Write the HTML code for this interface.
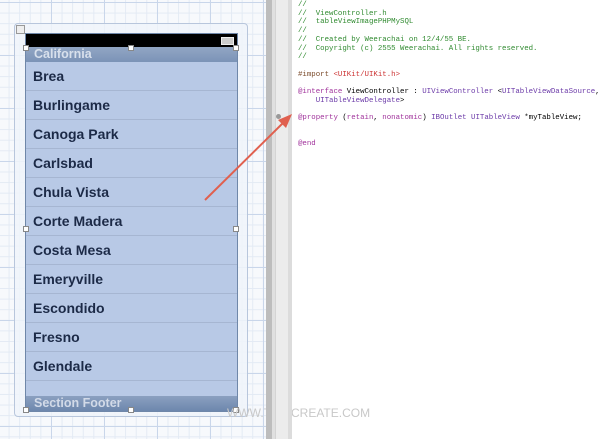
<!DOCTYPE html>
<html><head><style>
body{margin:0;width:600px;height:439px;overflow:hidden;position:relative;background:#fff;font-family:"Liberation Sans",sans-serif}
.grid{position:absolute;left:0;top:0;width:266px;height:439px;background-color:#f7f9fc;
background-image:linear-gradient(#c9d6ea 1px,transparent 1px),linear-gradient(90deg,#c9d6ea 1px,transparent 1px),linear-gradient(#e3eaf4 1px,transparent 1px),linear-gradient(90deg,#e3eaf4 1px,transparent 1px);
background-size:53px 53px,53px 53px,10.6px 10.6px,10.6px 10.6px;background-position:-2px 2px}
.frame{position:absolute;left:14px;top:23px;width:232px;height:392px;border:1px solid #b8c6dc;border-radius:4px;background:rgba(240,244,250,.85)}
.tbl{position:absolute;left:25px;top:33px;width:211px;height:377px;border:1px solid #6f87a9;background:#b8c9e6;overflow:hidden}
.sb{height:13px;background:#000;position:relative}
.bat{position:absolute;right:3px;top:3px;width:11px;height:6px;background:#ccc;border:1px solid #eee}
.hdr{height:15px;background:linear-gradient(#92a6c4,#7b93b7);color:#d8e0ec;font-weight:bold;font-size:12.5px;line-height:15px;padding-left:8px}
.row{height:28px;border-bottom:1px solid #a6b6d2;color:#1c2a47;font-weight:bold;font-size:14px;line-height:29px;padding-left:7px}
.ftr{position:absolute;bottom:0;left:0;right:0;height:15px;background:linear-gradient(#8ba0c0,#6d87ad);color:#d2dae8;font-weight:bold;font-size:12.5px;line-height:15px;padding-left:8px}
.h{position:absolute;width:4px;height:4px;background:#fff;border:1px solid #888}
.scr{position:absolute;left:266px;top:0;width:6px;height:439px;background:#bdbdbd}
.scr2{position:absolute;left:272px;top:0;width:3px;height:439px;background:#e0e0e0}
.gut{position:absolute;left:275px;top:0;width:13px;height:439px;background:#ececec;border-left:1px solid #d4d4d4}
.gut2{position:absolute;left:288px;top:0;width:4px;height:439px;background:#dcdcdc}
pre{position:absolute;left:298px;top:1px;margin:0;font-family:"Liberation Mono",monospace;font-size:7.4px;line-height:8.7px;color:#000}
.c{color:#2f8a2f}.k{color:#a0329b}.s{color:#c33}.t{color:#6b3aa8}
</style></head><body>
<div class="grid"></div>
<div class="frame"></div>
<div style="position:absolute;left:16px;top:25px;width:7px;height:7px;border:1px solid #999;background:#eee"></div>
<div class="tbl">
<div class="sb"><div class="bat"></div></div>
<div class="hdr">California</div>
<div class="row">Brea</div><div class="row">Burlingame</div><div class="row">Canoga Park</div><div class="row">Carlsbad</div><div class="row">Chula Vista</div><div class="row">Corte Madera</div><div class="row">Costa Mesa</div><div class="row">Emeryville</div><div class="row">Escondido</div><div class="row">Fresno</div><div class="row">Glendale</div>
<div class="ftr">Section Footer</div>
</div>
<div class="h" style="left:23px;top:45px"></div><div class="h" style="left:128px;top:45px"></div><div class="h" style="left:233px;top:45px"></div>
<div class="h" style="left:23px;top:226px"></div><div class="h" style="left:233px;top:226px"></div>
<div class="h" style="left:23px;top:407px"></div><div class="h" style="left:128px;top:407px"></div><div class="h" style="left:233px;top:407px"></div>
<div style="position:absolute;left:227px;top:406px;font-size:12px;color:#c8c8c8">WWW.THAICREATE.COM</div>
<div class="scr"></div><div class="scr2"></div><div class="gut"></div><div class="gut2"></div>
<div style="position:absolute;left:276px;top:114px;width:5px;height:5px;border-radius:50%;background:#999"></div>
<pre><span class="c">//
//  ViewController.h
//  tableViewImagePHPMySQL
//
//  Created by Weerachai on 12/4/55 BE.
//  Copyright (c) 2555 Weerachai. All rights reserved.
//</span>

<span style="color:#7a4a2a">#import</span> <span class="s">&lt;UIKit/UIKit.h&gt;</span>

<span class="k">@interface</span> ViewController : <span class="t">UIViewController</span> &lt;<span class="t">UITableViewDataSource</span>,
    <span class="t">UITableViewDelegate</span>&gt;

<span class="k">@property</span> (<span class="k">retain</span>, <span class="k">nonatomic</span>) <span class="t">IBOutlet</span> <span class="t">UITableView</span> *myTableView;


<span class="k">@end</span></pre>
<svg style="position:absolute;left:0;top:0" width="600" height="439">
<line x1="205" y1="200" x2="285" y2="121" stroke="#e0604f" stroke-width="2"/>
<polygon points="292,114 278,120 286,128" fill="#e0604f"/>
</svg>
</body></html>
